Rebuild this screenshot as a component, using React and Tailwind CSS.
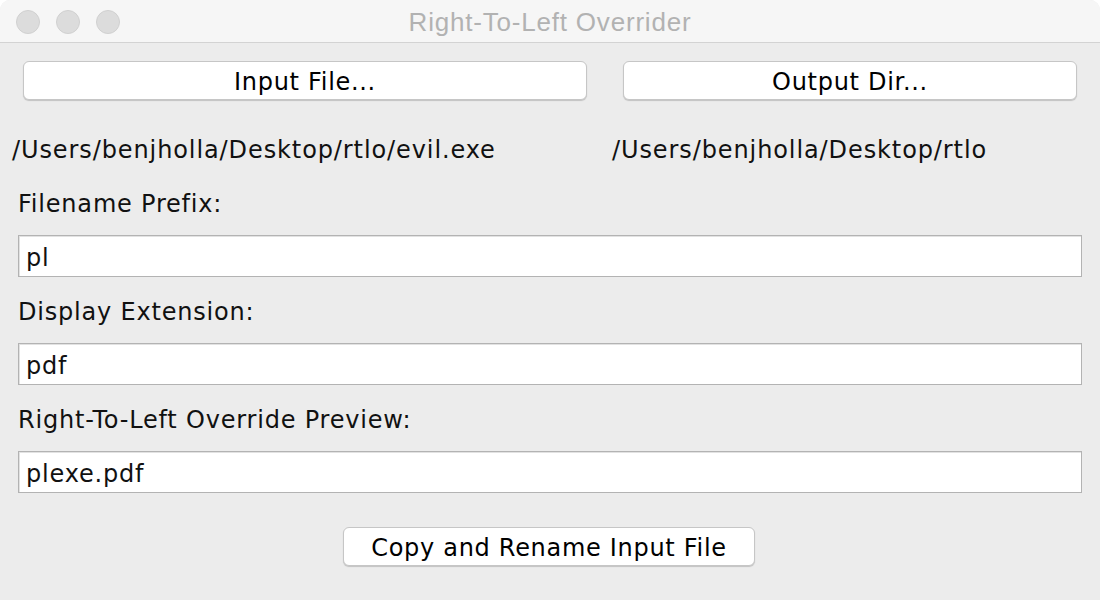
import React from "react";

const body = { fontFamily: '"DejaVu Sans", "Liberation Sans", sans-serif' };

const MacButton = ({ children, className }) => (
  <button
    className={`h-[39px] rounded-[6px] border border-[#c6c6c6] bg-white pt-[2px] text-[24px] leading-none tracking-[0.7px] text-black shadow-[0_1px_1px_rgba(0,0,0,0.18)] ${className}`}
  >
    {children}
  </button>
);

const Field = ({ label, value }) => (
  <div className="flex flex-col">
    <div className="h-[24px] pl-[18px] text-[24px] leading-none tracking-[0.8px] text-[#111]">{label}</div>
    <div className="mx-[18px] mt-[19px] flex h-[42px] items-center border border-[#b3b3b3] bg-white pl-[7px] pt-[3px] text-[24px] tracking-[0.8px] text-[#111] shadow-[inset_1px_1px_0_#e2e2e2]">
      {value}
    </div>
  </div>
);

export default function App() {
  return (
    <div className="flex h-[600px] w-[1100px] flex-col overflow-hidden rounded-t-[10px] bg-[#ececec]" style={body}>
      {/* title bar */}
      <div className="relative flex h-[43px] shrink-0 items-center justify-center border-b border-[#d3d3d3] bg-[#f6f6f6] pt-[2px]">
        <div className="absolute left-[16px] top-[10px] flex gap-[16px]">
          {[0, 1, 2].map((i) => (
            <div key={i} className="h-[24px] w-[24px] rounded-full border border-[#d0d0d0] bg-[#dcdcdc]" />
          ))}
        </div>
        <span
          className="text-[26px] leading-none tracking-[0.8px] text-[#b2b2b2]"
          style={{ fontFamily: '"Liberation Sans", Arial, sans-serif' }}
        >
          Right-To-Left Overrider
        </span>
      </div>

      {/* choose buttons */}
      <div className="mt-[18px] flex">
        <MacButton className="ml-[23px] w-[564px]">Input File...</MacButton>
        <MacButton className="ml-[36px] w-[454px]">Output Dir...</MacButton>
      </div>

      {/* selected paths */}
      <div className="mt-[38px] flex h-[24px] text-[24px] leading-none tracking-[0.9px] text-[#111]">
        <div className="w-[600px] pl-[12px]">/Users/benjholla/Desktop/rtlo/evil.exe</div>
        <div className="pl-[12px]">/Users/benjholla/Desktop/rtlo</div>
      </div>

      <div className="mt-[30px] flex flex-col gap-[23px]">
        <Field label="Filename Prefix:" value="pl" />
        <Field label="Display Extension:" value="pdf" />
        <Field label="Right-To-Left Override Preview:" value="plexe.pdf" />
      </div>

      <div className="mt-[34px] flex justify-center">
        <MacButton className="ml-[-2px] w-[412px]">Copy and Rename Input File</MacButton>
      </div>
    </div>
  );
}
